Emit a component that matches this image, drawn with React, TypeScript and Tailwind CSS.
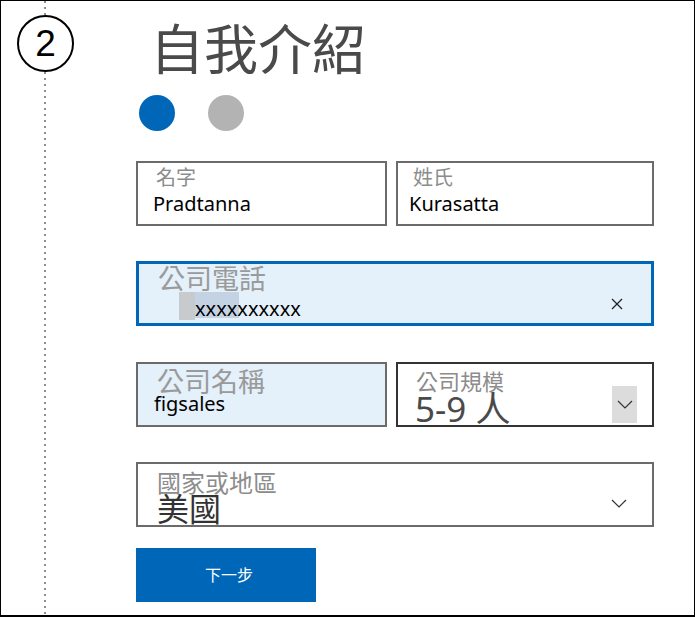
import React from 'react';

const sans = "font-['Noto_Sans','Noto_Sans_CJK_TC',sans-serif]";

const Chevron: React.FC = () => (
  <svg width="16" height="9" viewBox="0 0 16 9" fill="none" stroke="#333" strokeWidth="1.2">
    <polyline points="1,1 8,8 15,1" />
  </svg>
);

const Dotted: React.FC<{ className?: string }> = ({ className = '' }) => (
  <div className={`w-[2px] self-start ml-[27px] bg-[repeating-linear-gradient(to_bottom,#8f8f8f_0_2px,transparent_2px_6px)] ${className}`} />
);

const App: React.FC = () => {
  return (
    <div className={`w-[695px] h-[617px] border border-b-2 border-black bg-white flex overflow-hidden ${sans}`}>
      {/* step rail */}
      <div className="w-[135px] shrink-0">
        <div className="ml-[16px] w-[57px] h-full flex flex-col items-center">
          <Dotted className="h-[14px]" />
          <div className="w-[57px] h-[57px] shrink-0 rounded-full border-2 border-black flex items-center justify-center text-[37px] leading-none text-black font-['Liberation_Sans',sans-serif]">
            2
          </div>
          <Dotted className="flex-1" />
        </div>
      </div>

      {/* form */}
      <div className="w-[518px] flex flex-col">
        <h1 className="mt-[21px] ml-[14px] text-[54px] leading-none text-[#4a4a4a] font-normal">自我介紹</h1>

        <div className="mt-[19px] ml-[3px] flex gap-[33px]">
          <span className="w-[36px] h-[36px] rounded-full bg-[#0067b8]" />
          <span className="w-[36px] h-[36px] rounded-full bg-[#b3b3b3]" />
        </div>

        {/* name row */}
        <div className="mt-[30px] flex gap-[9px]">
          <div className="w-[251px] h-[65px] border-2 border-[#6b6b6b] pt-[5px] overflow-hidden">
            <div className="pl-[18px] text-[20px] leading-none text-[#8c8c8c]">名字</div>
            <div className="pl-[15px] mt-[6px] text-[20px] leading-[20px] text-black">Pradtanna</div>
          </div>
          <div className="flex-1 h-[65px] border-2 border-[#6b6b6b] pt-[5px] overflow-hidden">
            <div className="pl-[15px] text-[20px] leading-none text-[#8c8c8c]">姓氏</div>
            <div className="pl-[11px] mt-[6px] text-[20px] leading-[20px] text-black">Kurasatta</div>
          </div>
        </div>

        {/* phone */}
        <div className="mt-[35px] h-[65px] border-[3px] border-[#0067b8] bg-[#e4f0fa] flex overflow-hidden">
          <div className="flex-1 pt-[1px]">
            <div className="pl-[19px] text-[27px] leading-none text-[#9a9a9a]">公司電話</div>
            <div className="ml-[40px] h-[28px] flex">
              <div className="w-[16px] h-[28px] bg-[#c8cbce]" />
              <div className="relative h-[28px] flex items-end pb-[1px]">
                <div className="absolute left-0 top-0 w-[44px] h-[26px] bg-[#c3d3e3]" />
                <span className="relative text-[20px] leading-[20px] text-black">xxxxxxxxxx</span>
              </div>
            </div>
          </div>
          <div className="mr-[28px] mt-[21px] flex items-center">
            <svg width="12" height="12" viewBox="0 0 12 12" stroke="#222" strokeWidth="1.2">
              <line x1="1" y1="1" x2="11" y2="11" />
              <line x1="11" y1="1" x2="1" y2="11" />
            </svg>
          </div>
        </div>

        {/* company row */}
        <div className="mt-[36px] flex gap-[9px]">
          <div className="w-[251px] h-[65px] border-2 border-[#6b6b6b] bg-[#e4f0fa] pt-[4px] overflow-hidden">
            <div className="pl-[19px] text-[27px] leading-none text-[#9a9a9a]">公司名稱</div>
            <div className="pl-[16px] -mt-[1px] text-[20px] leading-[20px] text-black">figsales</div>
          </div>
          <div className="flex-1 h-[65px] border-2 border-[#333] flex overflow-hidden">
            <div className="flex-1 pt-[6px]">
              <div className="pl-[18px] text-[22px] leading-none text-[#8c8c8c]">公司規模</div>
              <div className="pl-[17px] -mt-[1px] text-[35px] leading-none text-[#4a4a4a] whitespace-nowrap">5-9 人</div>
            </div>
            <div className="self-end mb-[2px] mr-[15px] w-[25px] h-[37px] bg-[#dcdcdc] flex items-center justify-center">
              <Chevron />
            </div>
          </div>
        </div>

        {/* country */}
        <div className="mt-[35px] h-[65px] border-2 border-[#6b6b6b] flex overflow-hidden">
          <div className="flex-1 pt-[7px]">
            <div className="pl-[19px] text-[24px] leading-none text-[#8c8c8c]">國家或地區</div>
            <div className="pl-[19px] -mt-[2px] text-[32px] leading-none text-[#333]">美國</div>
          </div>
          <div className="self-end mb-[17px] mr-[25px]">
            <Chevron />
          </div>
        </div>

        <button className="mt-[21px] w-[180px] h-[54px] bg-[#0067b8] text-white text-[16px] leading-none pl-[6px]">
          下一步
        </button>
      </div>
    </div>
  );
};

export default App;
